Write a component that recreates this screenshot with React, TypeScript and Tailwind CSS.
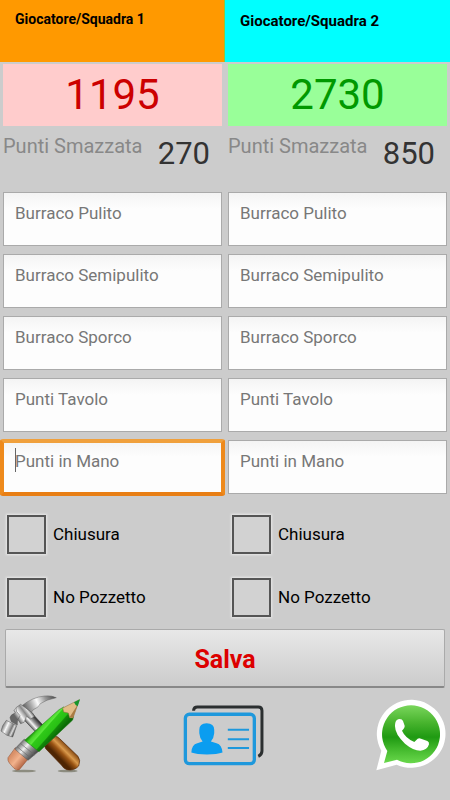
import { clsx } from 'clsx';

type Player = {
  id: string;
  name: string;
  total: number;
  hand: number;
  headerClass: string;
  totalClass: string;
  activeField?: string;
};

const players: Player[] = [
  {
    id: 'p1',
    name: 'Giocatore/Squadra 1',
    total: 1195,
    hand: 270,
    headerClass: 'bg-[#ff9900] border-r border-[#8ec63f] text-[14px] pt-2',
    totalClass: 'bg-[#ffcccc] text-[#cc0000]',
    activeField: 'Punti in Mano',
  },
  {
    id: 'p2',
    name: 'Giocatore/Squadra 2',
    total: 2730,
    hand: 850,
    headerClass: 'bg-[#00ffff] text-[15px] pt-[10px]',
    totalClass: 'bg-[#99ff99] text-[#009900]',
  },
];

const fields = ['Burraco Pulito', 'Burraco Semipulito', 'Burraco Sporco', 'Punti Tavolo', 'Punti in Mano'];
const flags = ['Chiusura', 'No Pozzetto'];

function ScoreField({ id, label, active }: { id: string; label: string; active: boolean }) {
  return (
    <div className="relative">
      <input
        id={id}
        type="text"
        inputMode="numeric"
        aria-label={label}
        placeholder={label}
        className="block h-[54px] w-full border border-[#aaaaaa] bg-linear-to-b from-[#f4f4f4] via-[#fdfdfd] via-30% to-[#fdfdfd] px-[11px] pb-3 text-[17px] text-black outline-none placeholder:text-[#777777]"
      />
      {active && (
        <>
          {/* focus ring and caret */}
          <span className="pointer-events-none absolute -inset-x-[3px] -top-px -bottom-0.5 rounded-[3px] border-4 border-[#ee8a1c] border-t-[#f0a03c] border-b-[#e87e14]" />
          <span className="pointer-events-none absolute top-2 left-3 h-6 w-px bg-[#666666]" />
        </>
      )}
    </div>
  );
}

function PlayerColumn({ player }: { player: Player }) {
  return (
    <section className="min-w-0">
      <h2 className={clsx('h-[62px] px-[15px] font-bold leading-[22px] text-black', player.headerClass)}>
        {player.name}
      </h2>

      <div className="px-[3px] pt-[2px]">
        <div className={clsx('flex h-[62px] items-center justify-center text-[42px] leading-none', player.totalClass)}>
          {player.total}
        </div>

        <div className="flex h-[66px] items-start justify-between pr-3">
          <span className="pt-2 text-[20px] leading-6 text-[#888888]">Punti Smazzata</span>
          <span className="pt-2 text-[31px] leading-10 text-[#333333]">{player.hand}</span>
        </div>

        <div className="flex flex-col gap-2">
          {fields.map((label) => (
            <ScoreField
              key={label}
              id={`${player.id}-${label}`}
              label={label}
              active={player.activeField === label}
            />
          ))}
        </div>

        <div className="flex flex-col gap-6 px-1 pt-[21px]">
          {flags.map((label) => (
            <label key={label} className="flex items-center gap-[7px] text-[17px] leading-none text-black">
              <input
                type="checkbox"
                className="size-[39px] shrink-0 appearance-none border-2 border-[#555555] bg-[#d2d2d2] shadow-[0_0_2px_1px_#e8e8e8] checked:bg-[#888888]"
              />
              {label}
            </label>
          ))}
        </div>
      </div>
    </section>
  );
}

function ToolsIcon() {
  return (
    <svg viewBox="0 30 255 240" className="h-20 w-[85px]" aria-hidden="true">
      <defs>
        <linearGradient id="shaft" gradientUnits="userSpaceOnUse" x1="84" y1="118" x2="106" y2="98">
          <stop offset="0" stopColor="#555" />
          <stop offset="0.35" stopColor="#f5f5f5" />
          <stop offset="0.6" stopColor="#999" />
          <stop offset="1" stopColor="#333" />
        </linearGradient>
        <linearGradient id="head" gradientUnits="userSpaceOnUse" x1="48" y1="98" x2="88" y2="68">
          <stop offset="0" stopColor="#666" />
          <stop offset="0.3" stopColor="#f5f5f5" />
          <stop offset="0.6" stopColor="#888" />
          <stop offset="0.8" stopColor="#ddd" />
          <stop offset="1" stopColor="#444" />
        </linearGradient>
        <linearGradient id="face" gradientUnits="userSpaceOnUse" x1="8" y1="122" x2="46" y2="140">
          <stop offset="0" stopColor="#777" />
          <stop offset="0.3" stopColor="#f8f8f8" />
          <stop offset="0.65" stopColor="#777" />
          <stop offset="0.8" stopColor="#ddd" />
          <stop offset="1" stopColor="#333" />
        </linearGradient>
        <linearGradient id="claw" gradientUnits="userSpaceOnUse" x1="72" y1="78" x2="168" y2="36">
          <stop offset="0" stopColor="#555" />
          <stop offset="0.25" stopColor="#aaa" />
          <stop offset="0.45" stopColor="#fafafa" />
          <stop offset="0.7" stopColor="#999" />
          <stop offset="1" stopColor="#444" />
        </linearGradient>
        <linearGradient id="wood" gradientUnits="userSpaceOnUse" x1="205" y1="182" x2="173" y2="214">
          <stop offset="0" stopColor="#7a3d08" />
          <stop offset="0.4" stopColor="#d9994c" />
          <stop offset="0.65" stopColor="#9a5414" />
          <stop offset="1" stopColor="#4e2503" />
        </linearGradient>
        <linearGradient id="green" gradientUnits="userSpaceOnUse" x1="122" y1="118" x2="165" y2="156">
          <stop offset="0" stopColor="#229a10" />
          <stop offset="0.12" stopColor="#46d428" />
          <stop offset="0.3" stopColor="#5ce83c" />
          <stop offset="0.36" stopColor="#2fc918" />
          <stop offset="0.68" stopColor="#28c014" />
          <stop offset="0.74" stopColor="#128a08" />
          <stop offset="1" stopColor="#0a6a06" />
        </linearGradient>
        <linearGradient id="ferrule" gradientUnits="userSpaceOnUse" x1="58" y1="178" x2="98" y2="215">
          <stop offset="0" stopColor="#777" />
          <stop offset="0.35" stopColor="#f0f0f0" />
          <stop offset="0.6" stopColor="#999" />
          <stop offset="1" stopColor="#4a4a4a" />
        </linearGradient>
        <linearGradient id="eraser" gradientUnits="userSpaceOnUse" x1="32" y1="215" x2="70" y2="248">
          <stop offset="0" stopColor="#d99068" />
          <stop offset="0.4" stopColor="#f2b28c" />
          <stop offset="1" stopColor="#a85838" />
        </linearGradient>
      </defs>
      <ellipse cx="72" cy="258" rx="36" ry="4" fill="#8c8c80" />
      <ellipse cx="203" cy="258" rx="30" ry="4" fill="#8c8c80" />
      {/* hammer */}
      <path d="M66 98 L88 76 L158 152 L136 172 Z" fill="url(#shaft)" stroke="#444" strokeWidth="2" />
      <path d="M134 184 L166 154 Q172 154 178 160 L234 214 Q243 226 236 243 Q222 259 200 254 Q190 250 184 240 L137 191 Z" fill="url(#wood)" stroke="#55290a" strokeWidth="2" />
      <path d="M66 62 Q98 36 134 33 Q156 31 169 38 Q138 44 121 56 Q116 68 100 74 L94 82 L80 78 Z" fill="url(#claw)" stroke="#666" strokeWidth="1.5" />
      <path d="M30 98 Q32 88 46 84 L42 76 L50 68 L68 88 L58 98 Q50 106 52 120 L34 110 Z" fill="url(#head)" stroke="#555" strokeWidth="1.5" />
      <path d="M48 68 L62 58 L98 84 L104 94 L92 102 L80 94 L72 112 L62 116 L54 104 L60 92 L50 80 Z" fill="url(#head)" stroke="#555" strokeWidth="1.5" />
      <path d="M19 106 L50 122 L38 156 Q20 154 3 138 L8 122 Z" fill="url(#face)" stroke="#555" strokeWidth="1.5" />
      {/* pencil */}
      <path d="M24 218 L46 188 L86 220 L58 254 Q50 258 42 250 L28 234 Q22 226 24 218 Z" fill="url(#eraser)" stroke="#8e4a2a" strokeWidth="1.5" />
      <path d="M44 192 L73 162 L116 199 L84 226 Z" fill="url(#ferrule)" stroke="#555" strokeWidth="1.5" />
      <path d="M51 185 L92 219 M61 175 L104 210" stroke="#666" strokeWidth="2" />
      <path d="M74 166 L177 74 L191 66 L221 93 L218 105 L117 200 Z" fill="url(#green)" stroke="#147a0c" strokeWidth="1.5" />
      <path d="M188 69 L238 44 L219 99 L209 98 L205 84 L191 81 Z" fill="#e2bd88" stroke="#8b6a3c" strokeWidth="1.5" />
      <path d="M209 96 L234 58 L219 99 Z" fill="#a97b44" />
      <path d="M222 52 L240 43 L233 64 Q226 62 222 52 Z" fill="#17952c" />
    </svg>
  );
}

function CardIcon() {
  return (
    <svg viewBox="40 40 250 190" className="h-[63px] w-[83px]" fill="none" aria-hidden="true">
      <path d="M75 60 V58 Q76 49 86 49 H270 Q281 49 281 60 V182 Q281 193 270 198" stroke="#2b2f30" strokeWidth="9" />
      <rect x="50" y="71" width="208" height="149" rx="12" stroke="#1e98dc" strokeWidth="10" />
      <path d="M68 186 Q69 162 86 158 L102 153 Q93 142 92 128 V118 Q92 98 114 98 Q137 98 137 118 V128 Q136 142 127 153 L144 158 Q160 162 162 186 Q146 192 115 192 Q84 192 68 186 Z" fill="#0b9df0" />
      <path d="M178 118 H242 M178 146 H242 M178 173 H242" stroke="#1e98dc" strokeWidth="6" />
    </svg>
  );
}

function WhatsAppIcon() {
  return (
    <svg viewBox="30 27 216 216" className="size-[72px]" aria-hidden="true">
      <defs>
        <linearGradient id="bubble" x1="0" y1="0" x2="0" y2="1">
          <stop offset="0" stopColor="#7ad65c" />
          <stop offset="0.3" stopColor="#48b42e" />
          <stop offset="0.55" stopColor="#1f9a12" />
          <stop offset="0.75" stopColor="#42b82c" />
          <stop offset="1" stopColor="#6ad84c" />
        </linearGradient>
      </defs>
      <path d="M34 241 L49 182 A103 102 0 1 1 95 224 Z" fill="#fff" />
      <path d="M57 219 L67 183 A87 87 0 1 1 96 209 Z" fill="url(#bubble)" />
      <path d="M91 98 Q94 87 104 87 Q112 87 114 93 L119 107 Q120 113 111 122 Q121 144 148 156 L158 146 Q163 143 168 146 L187 153 Q193 156 192 163 Q187 181 166 182 Q145 182 120 161 Q90 133 90 109 Q90 102 91 98 Z" fill="#fff" />
    </svg>
  );
}

export default function App() {
  return (
    <main className="min-h-screen bg-[#cccccc] font-[Roboto,sans-serif]">
      <form onSubmit={(e) => e.preventDefault()}>
        <div className="grid grid-cols-2">
          {players.map((player) => (
            <PlayerColumn key={player.id} player={player} />
          ))}
        </div>

        <div className="px-[5px] pt-3">
          <button
            type="submit"
            className="h-[59px] w-full rounded-xs border border-[#aaaaaa] border-b-2 border-b-[#888888] bg-linear-to-b from-[#e8e8e8] to-[#cccccc] pt-1 text-[25px] font-bold text-[#dd0000]"
          >
            Salva
          </button>
        </div>
      </form>

      <nav className="grid grid-cols-3 items-center pt-[7px] pr-[3px]">
        <button type="button" aria-label="Impostazioni" className="justify-self-start">
          <ToolsIcon />
        </button>
        <button type="button" aria-label="Contatti" className="justify-self-center">
          <CardIcon />
        </button>
        <button type="button" aria-label="WhatsApp" className="justify-self-end">
          <WhatsAppIcon />
        </button>
      </nav>
    </main>
  );
}
